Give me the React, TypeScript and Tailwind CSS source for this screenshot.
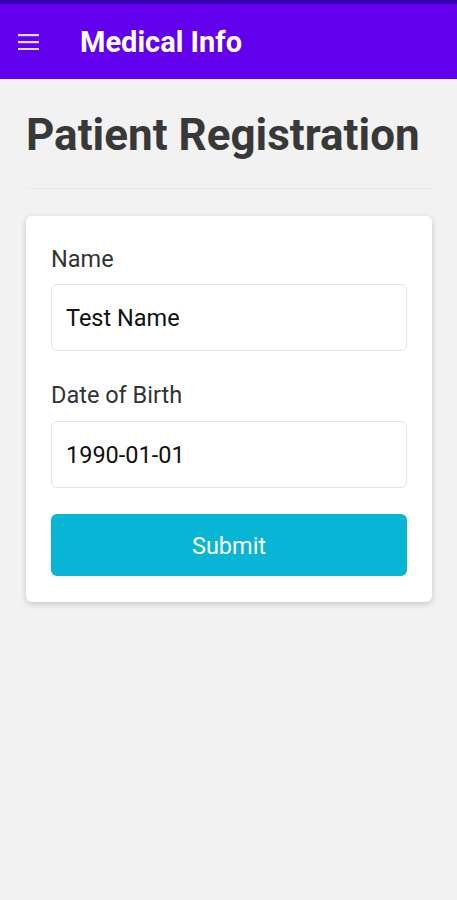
export default function App() {
  return (
    <div className="min-h-[900px] bg-[#f2f2f2] font-['Roboto',sans-serif]">
      <div className="h-1 bg-[#3700b3]" />
      <header className="flex h-[75px] items-center bg-[#6200ee] px-[18px] text-white">
        <svg width="22" height="16" viewBox="0 0 22 16" className="mr-[40px]">
          <rect x="0" y="0" width="21" height="2.2" fill="#e5d9ff" />
          <rect x="0" y="7" width="21" height="2.2" fill="#e5d9ff" />
          <rect x="0" y="14" width="21" height="2.2" fill="#e5d9ff" />
        </svg>
        <h1 className="pt-[2px] text-[29px] font-bold leading-none">Medical Info</h1>
      </header>

      <main className="px-[26px]">
        <h2 className="pt-[30px] pb-[27px] text-[44px] font-bold leading-[52px] text-[#383838]">
          Patient Registration
        </h2>
        <div className="mr-[-3px] h-px bg-[#e9e9e9]" />

        <form className="mt-[27px] mr-[-1px] rounded-[6px] bg-white px-[25px] pt-[29px] pb-[26px] shadow-[0_2px_6px_rgba(0,0,0,0.18)]">
          <label className="block text-[23.5px] leading-[28px] text-[#333]">Name</label>
          <div className="mt-[11px] flex h-[67px] items-center rounded-[6px] border border-[#e4e4e4] px-[14px] pt-[3px] text-[23.5px] text-[#111]">
            Test Name
          </div>

          <label className="mt-[30px] block text-[23.5px] leading-[28px] text-[#333]">Date of Birth</label>
          <div className="mt-[12px] flex h-[67px] items-center rounded-[6px] border border-[#e4e4e4] px-[14px] pt-[3px] text-[23.5px] text-[#111]">
            1990-01-01
          </div>

          <button
            type="button"
            className="mt-[26px] flex h-[62px] w-full items-center justify-center rounded-[6px] bg-[#09b5d5] pt-[3px] text-[23.5px] text-white"
          >
            Submit
          </button>
        </form>
      </main>
    </div>
  )
}
